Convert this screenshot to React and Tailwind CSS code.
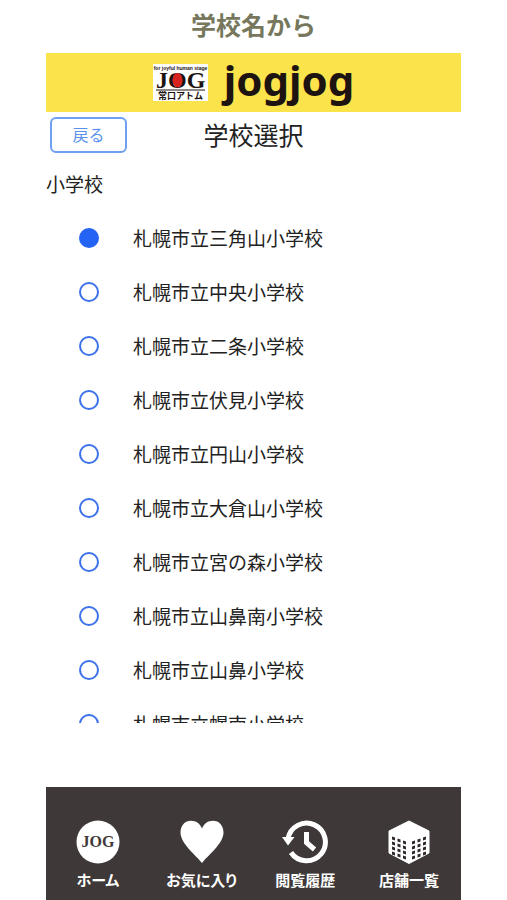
import { useState } from "react"

const schools = [
    "札幌市立三角山小学校",
    "札幌市立中央小学校",
    "札幌市立二条小学校",
    "札幌市立伏見小学校",
    "札幌市立円山小学校",
    "札幌市立大倉山小学校",
    "札幌市立宮の森小学校",
    "札幌市立山鼻南小学校",
    "札幌市立山鼻小学校",
    "札幌市立幌南小学校",
]

function LogoMark() {
    return (
        <svg viewBox="0 0 55 37" className="w-[55px] h-[37px] bg-white" role="img" aria-label="JOG 常口アトム">
            <text x="27.5" y="6" textAnchor="middle" fontSize="5" fontWeight="700" fill="#1d1310" className="font-['Liberation_Sans',sans-serif]">for joyful human stage</text>
            <text x="3" y="24" fontSize="24" fontWeight="700" fill="#1d1310" className="font-['Liberation_Serif',serif]">JOG</text>
            <ellipse cx="24.500" cy="16.200" rx="5" ry="7.300" fill="#d7231c" />
            <path d="M3 26h49" stroke="#1d1310" strokeWidth="1" />
            <text x="27.5" y="35" textAnchor="middle" fontSize="9" fontWeight="700" fill="#1d1310" className="font-['Noto_Sans_CJK_JP',sans-serif]">常口アトム</text>
        </svg>
    )
}

function HomeIcon() {
    return (
        <svg viewBox="0 0 44 44" className="size-11" aria-hidden="true">
            <circle cx="22" cy="22" r="21.5" fill="#fff" />
            <text x="22" y="27" textAnchor="middle" fontSize="16" fontWeight="700" fill="#3e3938" className="font-['Liberation_Serif',serif]">JOG</text>
        </svg>
    )
}

function HeartIcon() {
    return (
        <svg viewBox="0 0 44 44" className="size-11" aria-hidden="true">
            <path d="M22 43C17 36 .5 24 .5 12.5C.5 5.500 5 .8 11 .8C16 .8 20 3.500 22 8.500C24 3.500 28 .8 33 .8C39 .8 43.500 5.500 43.500 12.500C43.500 24 27 36 22 43Z" fill="#fff" />
        </svg>
    )
}

function HistoryIcon() {
    return (
        <svg viewBox="0 0 48 44" className="w-12 h-11" aria-hidden="true">
            <path d="M7 19A18.800 18.800 0 1 1 10 32.500" fill="none" stroke="#fff" strokeWidth="5" />
            <path d="M1 17H13.500L7 25.500Z" fill="#fff" />
            <path d="M25.500 12V22.500L33.500 29.500" fill="none" stroke="#fff" strokeWidth="5" />
        </svg>
    )
}

function BuildingIcon() {
    const rows = [0, 1, 2, 3]
    const cols = [0, 1, 2]
    return (
        <svg viewBox="0 0 44 44" className="size-11" aria-hidden="true">
            <path d="M22 1L42 11V33L22 43.500L2 33V11Z" fill="#fff" stroke="#fff" strokeLinejoin="round" />
            {rows.map(r => cols.map(c => (
                <g key={`${r}-${c}`} fill="#2f2a29">
                    <path d={`M${5 + c * 5.5} ${16.5 + r * 5 + c * 2}l3 1v3l-3 -1z`} />
                    <path d={`M${39 - c * 5.5} ${16.5 + r * 5 + c * 2}l-3 1v3l3 -1z`} />
                </g>
            )))}
        </svg>
    )
}

const menus = [
    { label: "ホーム", icon: <HomeIcon /> },
    { label: "お気に入り", icon: <HeartIcon /> },
    { label: "閲覧履歴", icon: <HistoryIcon /> },
    { label: "店舗一覧", icon: <BuildingIcon /> },
]

function App() {
    const [selected, setSelected] = useState(schools[0])

    return (
        <div className="h-screen flex flex-col px-[46px] bg-white text-[#222] font-['Noto_Sans_CJK_JP',sans-serif]">
            <p className="h-[53px] shrink-0 pt-1.5 text-center text-[25px] leading-9 font-bold text-[#76775c]">学校名から</p>
            <header className="h-[59px] shrink-0 flex items-center justify-center gap-4 bg-[#fbe34b]">
                <LogoMark />
                <span className="pb-1.5 text-[42px] leading-[50px] font-bold text-[#1d1310] font-['Noto_Sans',sans-serif]">jogjog</span>
            </header>
            <div className="h-[46px] shrink-0 grid grid-cols-[1fr_auto_1fr] items-center">
                <button type="button" className="w-[77px] h-9 ml-1 pb-0.5 border-2 border-[#6f9ff0] rounded-md text-base leading-5 text-[#5b92ee]">戻る</button>
                <h1 className="pb-0.5 text-[25px] leading-8">学校選択</h1>
            </div>
            <main className="flex-1 min-h-0 flex flex-col">
                <h2 id="school_group" className="h-[53px] shrink-0 flex items-center text-[19px]">小学校</h2>
                <ul aria-labelledby="school_group" className="flex-1 min-h-0 overflow-hidden">
                    {schools.map(name => (
                        <li key={name}>
                            <label className="h-[54px] flex items-center gap-[34px] pl-[33px] text-[19px]">
                                <input
                                    type="radio"
                                    name="school"
                                    value={name}
                                    checked={selected === name}
                                    onChange={(event) => setSelected(event.target.value)}
                                    className="appearance-none size-5 shrink-0 rounded-full border-2 border-[#3d72ea] checked:bg-[#2563f4] checked:border-[#2563f4]"
                                />
                                <span>{name}</span>
                            </label>
                        </li>
                    ))}
                </ul>
            </main>
            <nav className="h-[113px] mt-16 shrink-0 grid grid-cols-4 bg-[#3e3938] text-white">
                {menus.map(menu => (
                    <a key={menu.label} href="#" className="flex flex-col items-center gap-1.5 pt-[33px] text-[15px] leading-5 font-bold whitespace-nowrap">
                        {menu.icon}
                        <span className="[font-feature-settings:'palt']">{menu.label}</span>
                    </a>
                ))}
            </nav>
        </div>
    )
}

export default App
